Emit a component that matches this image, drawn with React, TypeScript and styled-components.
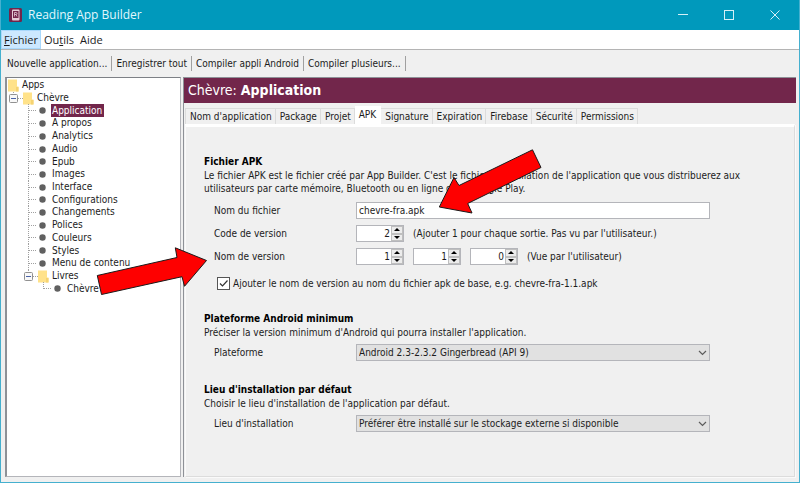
import React, { useState } from "react";
import styled, { createGlobalStyle, css } from "styled-components";

const plum = "#72264b";
const face = "#f0f0f0";
const tahoma = `"DejaVu Sans Condensed", "Noto Sans", sans-serif`;
const segoe = `"Open Sans", "Noto Sans", sans-serif`;

const GlobalStyle = createGlobalStyle`
  *, *::before, *::after { box-sizing: border-box; }
  html, body, #root { height: 100%; }
  body { margin: 0; background: ${face}; color: #1c1c1c; font: 10px/13px ${tahoma}; }
  button, input, select { font: inherit; color: inherit; margin: 0; padding: 0; border: 0; border-radius: 0; background: none; outline: none; }
  button { cursor: default; white-space: nowrap; }
  h1, h2, p, ul { margin: 0; padding: 0; font-size: inherit; font-weight: inherit; }
`;

const Window = styled.div`
  position: relative;
  min-height: 100%;
  display: flex;
  flex-direction: column;
  border: 1px solid #45b0cf;
  border-top: 0;
  overflow: hidden;
`;

const TitleBar = styled.header`
  display: flex;
  align-items: center;
  height: 30px;
  margin: 0 -1px;
  padding-left: 9px;
  gap: 6px;
  flex: none;
  background: #0099bc;
  color: #e2f7fc;
  font: 12px/16px ${segoe};
`;

const WindowTitle = styled.h1`
  flex: 1;
`;

const CaptionButton = styled.button`
  width: 46px;
  height: 30px;
  display: grid;
  place-items: center;
`;

const Captions = styled.div`
  display: flex;
  margin-right: 2px;
`;

const MenuBar = styled.nav`
  display: flex;
  flex: none;
  height: 20px;
  background: #fff;
  border-bottom: 1px solid #b4b4b4;
  font: 11px/16px ${segoe};
`;

const MenuItem = styled.button<{ $active?: boolean }>`
  height: 19px;
  padding: 0 2px;
  border: 1px solid ${(p) => (p.$active ? "#a9d8fb" : "transparent")};
  background: ${(p) => (p.$active ? "#cce8ff" : "none")};
`;

const Toolbar = styled.div`
  display: flex;
  align-items: center;
  flex: none;
  height: 27px;
  padding-left: 2px;
`;

const ToolButton = styled.button`
  height: 15px;
  padding: 0 4px;
  border-right: 1px solid #a0a0a0;
`;

const Main = styled.main`
  flex: 1;
  display: grid;
  grid-template-columns: 176px minmax(0, 1fr);
  gap: 2px;
  padding: 0 3px 5px 4px;
`;

const TreePane = styled.aside`
  background: #fff;
  border: 1px solid #b4b5ba;
  border-top-color: #7d8086;
  border-left: 2px solid #8e9197;
  padding: 1px 0 0 1px;
`;

const Tree = styled.ul`
  display: grid;
  grid-auto-rows: 1fr;
  min-height: 216px;
  list-style: none;
`;

const TreeRow = styled.li`
  display: flex;
  align-items: stretch;
  line-height: 12px;
`;

const TreeLabel = styled.button<{ $selected?: boolean }>`
  padding: 0 2px 0 1px;
  line-height: 12px;
  ${(p) =>
    p.$selected &&
    css`
      background: ${plum};
      color: #fff;
    `}
`;

const Glyph = styled.svg`
  flex: none;
  display: block;
  height: 13px;
  margin-bottom: -1px;
`;

const Editor = styled.section`
  display: flex;
  flex-direction: column;
  min-width: 0;
  border-left: 1px solid #8e9197;
  border-top: 1px solid #8e9197;
`;

const PageTitle = styled.h2`
  padding: 0 4px;
  background: ${plum};
  color: #fff;
  font: 14px/25px ${tahoma};
`;

const TabStrip = styled.div`
  display: flex;
  align-items: flex-end;
  height: 21px;
  padding-left: 1px;
`;

const Tab = styled.button<{ $active?: boolean }>`
  height: ${(p) => (p.$active ? 18 : 16)}px;
  padding: 0 3px 0 4px;
  border: 1px solid #dcdcdc;
  border-width: 1px 1px 0 0;
  ${(p) =>
    p.$active &&
    css`
      background: #fff;
      padding: 0 4px 2px;
      border-color: #fff;
    `}
  &:first-child {
    border-left-width: 1px;
  }
`;

const TabPage = styled.form`
  flex: 1;
  display: flex;
  flex-direction: column;
  gap: 21px;
  margin: 0 1px 0 1px;
  padding: 27px 51px 0 18px;
  border: 1px solid #dcdcdc;
  border-top: 3px solid #fff;
  border-left-color: #fafafa;
  box-shadow: 1px 1px 0 #fafafa;
`;

const Section = styled.section`
  display: flex;
  flex-direction: column;
`;

const Heading = styled.h2`
  color: #000;
  font-weight: bold;
  line-height: 15px;
`;

const Fields = styled.div<{ $loose?: boolean }>`
  display: grid;
  gap: 6px;
  margin-top: ${(p) => (p.$loose ? 7 : 5)}px;
  padding: 0 33px 0 10px;
`;

const Field = styled.div`
  display: grid;
  grid-template-columns: 142px minmax(0, 1fr);
  align-items: center;
  min-height: 17px;
`;

const Inline = styled.div`
  display: flex;
  align-items: center;
  gap: 9px;
  white-space: nowrap;
`;

const TextBox = styled.input`
  width: 100%;
  height: 17px;
  padding: 0 2px;
  border: 1px solid #b4b5ba;
  background: #fff;
`;

const SpinBox = styled.span`
  display: grid;
  grid-template: 1fr 1fr / minmax(0, 1fr) 12px;
  width: 48px;
  height: 17px;
  border: 1px solid #b4b5ba;
  background: #fff;
`;

const SpinInput = styled.input`
  grid-row: span 2;
  min-width: 0;
  width: 100%;
  padding-right: 1px;
  text-align: right;
`;

const SpinButton = styled.button`
  display: grid;
  place-items: center;
  background: #ececec;
  border: 1px solid #bfbfbf;
  overflow: hidden;
  svg { display: block; }
`;

const CheckRow = styled.label`
  display: flex;
  align-items: center;
  gap: 3px;
  margin: 12px 0 0 13px;
`;

const CheckMark = styled.span`
  display: grid;
  width: 13px;
  height: 13px;
  > * { grid-area: 1 / 1; }
  svg { pointer-events: none; }
  input:not(:checked) + svg { visibility: hidden; }
`;

const CheckBox = styled.input`
  appearance: none;
  width: 13px;
  height: 13px;
  border: 1px solid #555;
  background: #fff;
`;

const Combo = styled.span`
  display: grid;
  align-items: center;
  > * { grid-area: 1 / 1; }
  svg { justify-self: end; margin-right: 3px; pointer-events: none; }
`;

const Select = styled.select`
  appearance: none;
  width: 100%;
  height: 17px;
  padding: 0 16px 0 2px;
  border: 1px solid #b4b5ba;
  background: #e1e1e1;
`;

const Annotations = styled.svg`
  position: absolute;
  left: -1px;
  top: 0;
  pointer-events: none;
`;

const DOTS = { stroke: "#a0a0a0", strokeDasharray: "1 1", shapeRendering: "crispEdges" as const };

const Folder = ({ x }: { x: number }) => (
  <g>
    <path d={`M${x} 0.500h9v7h1.500v5h-10.500z`} fill="#ffe28a" />
    <path d={`M${x + 8} 8h2.500v4.500h-2.500z`} fill="#f5d373" />
  </g>
);

const Expander = ({ x }: { x: number }) => (
  <g>
    <rect x={x + 0.5} y="2.5" width="8" height="8" rx="1" fill="#f8f8f8" stroke="#919191" />
    <path d={`M${x + 2} 6.5h5`} stroke="#4b63a7" />
  </g>
);

type Kind = "root" | "app" | "page" | "books" | "book";
const glyphWidth: Record<Kind, number> = { root: 13, app: 28, page: 43, books: 43, book: 58 };

const TreeGlyph = ({ kind }: { kind: Kind }) => (
  <Glyph width={glyphWidth[kind]} height="13" viewBox={`0 0 ${glyphWidth[kind]} 13`} aria-hidden="true">
    {kind === "root" && <Folder x={0} />}
    {kind === "app" && (
      <>
        <path d="M5.5 0v2M10 6.5h5" {...DOTS} />
        <Expander x={1} />
        <Folder x={15} />
      </>
    )}
    {kind === "page" && (
      <>
        <path d="M20.5 0v13M21 6.5h7" {...DOTS} />
        <circle cx="34.5" cy="6.5" r="3.2" fill="#606060" />
      </>
    )}
    {kind === "books" && (
      <>
        <path d="M20.5 0v2M25 6.5h5" {...DOTS} />
        <Expander x={16} />
        <Folder x={30} />
      </>
    )}
    {kind === "book" && (
      <>
        <path d="M35.5 0v7M36 6.5h8" {...DOTS} />
        <circle cx="49.5" cy="6.5" r="3.2" fill="#606060" />
      </>
    )}
  </Glyph>
);

const nodes: [Kind, string][] = [
  ["root", "Apps"],
  ["app", "Chèvre"],
  ...["Application", "A propos", "Analytics", "Audio", "Epub", "Images", "Interface", "Configurations", "Changements", "Polices", "Couleurs", "Styles", "Menu de contenu"].map((n): [Kind, string] => ["page", n]),
  ["books", "Livres"],
  ["book", "Chèvre"],
];

const tabs = ["Nom d'application", "Package", "Projet", "APK", "Signature", "Expiration", "Firebase", "Sécurité", "Permissions"];

const Spinner = ({ id, label, initial }: { id: string; label: string; initial: number }) => {
  const [value, setValue] = useState(initial);
  return (
    <SpinBox>
      <SpinInput id={id} aria-label={label} inputMode="numeric" value={value} onChange={(e) => setValue(Number(e.target.value) || 0)} />
      <SpinButton type="button" aria-label={`${label} +`} onClick={() => setValue(value + 1)}>
        <svg width="6" height="3"><path d="M0 3L3 0L6 3z" fill="#000" /></svg>
      </SpinButton>
      <SpinButton type="button" aria-label={`${label} -`} onClick={() => setValue(Math.max(0, value - 1))}>
        <svg width="6" height="3"><path d="M0 0L3 3L6 0z" fill="#000" /></svg>
      </SpinButton>
    </SpinBox>
  );
};

const DropDown = ({ id, value }: { id: string; value: string }) => (
  <Combo>
    <Select id={id} defaultValue={value}>
      <option>{value}</option>
    </Select>
    <svg width="9" height="6"><path d="M1 1L4.500 4.500L8 1" fill="none" stroke="#5c5c5c" strokeWidth="1.200" /></svg>
  </Combo>
);

export default function App() {
  const [selected, setSelected] = useState(2);
  const [tab, setTab] = useState("APK");
  return (
    <>
      <GlobalStyle />
      <Window>
        <TitleBar>
          <svg width="13" height="14" viewBox="0 0 13 14" aria-hidden="true">
            <rect width="13" height="14" rx="1.500" fill={plum} />
            <rect x="3" y="1.500" width="7.500" height="11" rx="1" fill="#e4cdd7" />
            <rect x="4" y="3" width="5.500" height="7" fill={plum} />
            <path d="M5.500 8.500v-4h1.500a1 1 0 0 1 0 2h-1.500M7 6.500l1 2" fill="none" stroke="#e4cdd7" strokeWidth="0.800" />
          </svg>
          <WindowTitle>Reading App Builder</WindowTitle>
          <Captions>
            <CaptionButton aria-label="Réduire">
              <svg width="11" height="10"><path d="M0 4.500h10" stroke="#d5f0f7" /></svg>
            </CaptionButton>
            <CaptionButton aria-label="Agrandir">
              <svg width="10" height="10"><rect x="0.500" y="0.500" width="9" height="9" fill="none" stroke="#d5f0f7" /></svg>
            </CaptionButton>
            <CaptionButton aria-label="Fermer">
              <svg width="10" height="10"><path d="M0.500 0.500l9 9M9.500 0.500l-9 9" stroke="#d5f0f7" /></svg>
            </CaptionButton>
          </Captions>
        </TitleBar>
        <MenuBar>
          <MenuItem $active><u>F</u>ichier</MenuItem>
          <MenuItem>Ou<u>t</u>ils</MenuItem>
          <MenuItem>Aide</MenuItem>
        </MenuBar>
        <Toolbar>
          <ToolButton>Nouvelle application...</ToolButton>
          <ToolButton>Enregistrer tout</ToolButton>
          <ToolButton>Compiler appli Android</ToolButton>
          <ToolButton>Compiler plusieurs...</ToolButton>
        </Toolbar>
        <Main>
          <TreePane>
            <Tree>
              {nodes.map(([kind, name], i) => (
                <TreeRow key={i}>
                  <TreeGlyph kind={kind} />
                  <TreeLabel $selected={i === selected} onClick={() => setSelected(i)}>{name}</TreeLabel>
                </TreeRow>
              ))}
            </Tree>
          </TreePane>
          <Editor>
            <PageTitle>Chèvre: <b>Application</b></PageTitle>
            <TabStrip role="tablist">
              {tabs.map((t) => (
                <Tab key={t} type="button" role="tab" aria-selected={t === tab} $active={t === tab} onClick={() => setTab(t)}>{t}</Tab>
              ))}
            </TabStrip>
            <TabPage>
              <Section>
                <Heading>Fichier APK</Heading>
                <p>Le fichier APK est le fichier créé par App Builder. C'est le fichier d'installation de l'application que vous distribuerez aux utilisateurs par carte mémoire, Bluetooth ou en ligne dans Google Play.</p>
                <Fields $loose>
                  <Field>
                    <label htmlFor="file">Nom du fichier</label>
                    <TextBox id="file" defaultValue="chevre-fra.apk" />
                  </Field>
                  <Field>
                    <label htmlFor="code">Code de version</label>
                    <Inline>
                      <Spinner id="code" label="Code de version" initial={2} />
                      <span>(Ajouter 1 pour chaque sortie. Pas vu par l'utilisateur.)</span>
                    </Inline>
                  </Field>
                  <Field>
                    <label htmlFor="major">Nom de version</label>
                    <Inline>
                      <Spinner id="major" label="Version majeure" initial={1} />
                      <Spinner id="minor" label="Version mineure" initial={1} />
                      <Spinner id="patch" label="Révision" initial={0} />
                      <span>(Vue par l'utilisateur)</span>
                    </Inline>
                  </Field>
                </Fields>
                <CheckRow>
                  <CheckMark>
                    <CheckBox type="checkbox" defaultChecked />
                    <svg width="13" height="13"><path d="M3 6.500L5.500 9L10.500 3.500" fill="none" stroke="#333" strokeWidth="1.200" /></svg>
                  </CheckMark>
                  Ajouter le nom de version au nom du fichier apk de base, e.g. chevre-fra-1.1.apk
                </CheckRow>
              </Section>
              <Section>
                <Heading>Plateforme Android minimum</Heading>
                <p>Préciser la version minimum d'Android qui pourra installer l'application.</p>
                <Fields>
                  <Field>
                    <label htmlFor="platform">Plateforme</label>
                    <DropDown id="platform" value="Android 2.3-2.3.2 Gingerbread (API 9)" />
                  </Field>
                </Fields>
              </Section>
              <Section>
                <Heading>Lieu d'installation par défaut</Heading>
                <p>Choisir le lieu d'installation de l'application par défaut.</p>
                <Fields>
                  <Field>
                    <label htmlFor="location">Lieu d'installation</label>
                    <DropDown id="location" value="Préférer être installé sur le stockage externe si disponible" />
                  </Field>
                </Fields>
              </Section>
            </TabPage>
          </Editor>
        </Main>
        <Annotations width="560" height="300" aria-hidden="true">
          <g fill="#fe0000" stroke="#1a1a1a" strokeWidth="1">
            <path d="M97.300 275.500L177 257.500L175.300 247.800L206.500 260.500L184.500 286.300L182 276.700L101.500 294.500Z" />
            <path d="M532.500 149.800L541 167.500L467.700 203.500L472 213L439.300 207L454 177.500L459 185.500Z" />
          </g>
        </Annotations>
      </Window>
    </>
  );
}
